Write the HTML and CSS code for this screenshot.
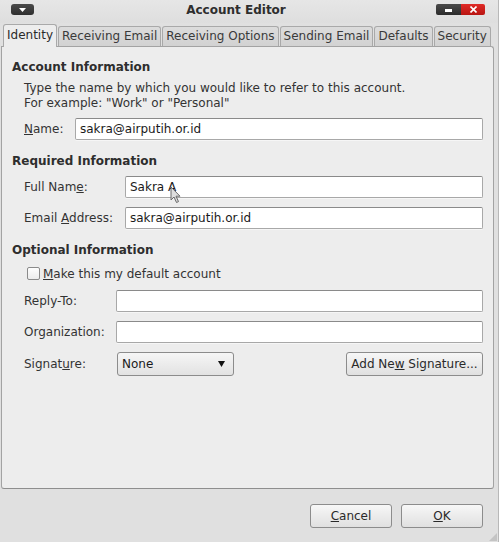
FILE: index.html
```html
<!DOCTYPE html>
<html>
<head>
<meta charset="utf-8">
<link rel="stylesheet" href="styles.css">
</head>
<body>
<div class="window">
  <div class="titlebar">
    <div class="menu-btn"><svg width="7" height="4" viewBox="0 0 7 4"><path d="M0 0H7L3.5 4Z" fill="#fff"/></svg></div>
    <div class="title">Account Editor</div>
    <div class="controls">
      <div class="ctl ctl-min"><span class="min-bar"></span></div>
      <div class="ctl ctl-close"><svg width="7" height="7" viewBox="0 0 7 7"><path d="M0.5 0.5L6.5 6.5M6.5 0.5L0.5 6.5" stroke="#fff" stroke-width="1.6"/></svg></div>
    </div>
  </div>
  <div class="tabs">
    <div class="tab active">Identity</div>
    <div class="tab">Receiving Email</div>
    <div class="tab">Receiving Options</div>
    <div class="tab">Sending Email</div>
    <div class="tab">Defaults</div>
    <div class="tab">Security</div>
  </div>
  <div class="panel">
    <div class="heading">Account Information</div>
    <div class="desc">Type the name by which you would like to refer to this account.<br>For example: "Work" or "Personal"</div>
    <div class="row row-name">
      <label class="lbl lbl-name"><u>N</u>ame:</label>
      <div class="field">sakra@airputih.or.id</div>
    </div>

    <div class="heading heading-gap">Required Information</div>
    <div class="row row-first">
      <label class="lbl lbl-req">Full Nam<u>e</u>:</label>
      <div class="field">Sakra A</div>
    </div>
    <div class="row row-email">
      <label class="lbl lbl-req">Email <u>A</u>ddress:</label>
      <div class="field">sakra@airputih.or.id</div>
    </div>

    <div class="heading heading-gap">Optional Information</div>
    <div class="check-row">
      <span class="checkbox"></span>
      <span class="check-label"><u>M</u>ake this my default account</span>
    </div>
    <div class="row row-reply">
      <label class="lbl lbl-opt">Reply-To:</label>
      <div class="field"></div>
    </div>
    <div class="row row-org">
      <label class="lbl lbl-opt">Organization:</label>
      <div class="field"></div>
    </div>
    <div class="row row-sig">
      <label class="lbl lbl-opt">Signat<u>u</u>re:</label>
      <div class="select"><span>None</span><svg width="7" height="6" viewBox="0 0 7 6"><path d="M0 0H7L3.5 6Z" fill="#111"/></svg></div>
      <div class="spacer"></div>
      <div class="button btn-sig"><span>Add Ne<u>w</u> Signature...</span></div>
    </div>
  </div>
  <div class="footer">
    <div class="button btn-foot"><span><u>C</u>ancel</span></div>
    <div class="button btn-foot"><span><u>O</u>K</span></div>
  </div>
  <svg class="grip" width="8" height="8" viewBox="0 0 8 8"><path d="M8 0V8H0Z" fill="#c4c4c4"/></svg>
  <svg class="cursor" width="12" height="18" viewBox="0 0 12 18"><path d="M1 1V14L4 11L6.5 16.5L8.5 15.6L6 10.2H10Z" fill="#d8d8d8" fill-opacity="0.85" stroke="#6a6a6a" stroke-width="1"/></svg>
</div>
</body>
</html>
```
FILE: styles.css
```css
* { box-sizing: border-box; }
html, body { margin: 0; padding: 0; }
body {
  width: 499px;
  height: 542px;
  overflow: hidden;
  font-family: "DejaVu Sans", sans-serif;
  font-size: 12px;
  color: #333;
  background: #e0e0e0;
}
.window {
  position: relative;
  width: 499px;
  height: 542px;
  display: flex;
  flex-direction: column;
  border-right: 1px solid #b8b8b8;
}
.titlebar {
  height: 23px;
  flex: none;
  display: flex;
  align-items: flex-start;
  background: linear-gradient(#e6e6e6, #dedede);
}
.menu-btn {
  margin: 4px 0 0 11px;
  width: 23px;
  height: 11px;
  border-radius: 3px;
  background: linear-gradient(#4a4a4a, #2e2e2e);
  display: flex;
  align-items: center;
  justify-content: center;
}
.title {
  flex: 1;
  text-align: center;
  font-weight: bold;
  line-height: 15px;
  margin-top: 3px;
  color: #2e2e2e;
  padding-left: 2px;
}
.controls {
  margin: 4px 13px 0 0;
  display: flex;
  height: 11px;
}
.ctl {
  width: 25px;
  height: 11px;
  display: flex;
  align-items: center;
  justify-content: center;
}
.ctl-min {
  background: linear-gradient(#4a4a4a, #2c2c2c);
  border-radius: 2px 0 0 2px;
}
.min-bar {
  width: 7px;
  height: 3px;
  background: #fff;
  margin-top: 1px;
}
.ctl-close {
  width: 24px;
  background: linear-gradient(#e02a26, #b81512);
  border-radius: 0 2px 2px 0;
}
.tabs {
  height: 23px;
  flex: none;
  display: flex;
  align-items: flex-end;
  padding-left: 3px;
  position: relative;
  z-index: 1;
}
.tab {
  height: 20px;
  line-height: 18px;
  padding: 0 3px;
  margin-right: 1px;
  border: 1px solid #a9a9a9;
  border-bottom: none;
  border-radius: 3px 3px 0 0;
  background: linear-gradient(#dcdcdc, #d2d2d2);
  color: #3a3a3a;
  white-space: nowrap;
}
.tab.active {
  height: 23px;
  line-height: 20px;
  margin-bottom: -1px;
  padding: 0 3px;
  background: #ededed;
  color: #2a2a2a;
}
.panel {
  height: 443px;
  flex: none;
  margin: 0 4px 0 1px;
  background: #ededed;
  border: 1px solid #a3a3a3;
  border-bottom-color: #8e8e8e;
  border-radius: 0 3px 3px 3px;
  padding: 13px 10px 0 10px;
  display: flex;
  flex-direction: column;
}
.heading {
  font-weight: bold;
  line-height: 15px;
  color: #2e2e2e;
}
.heading-gap { margin-top: 14px; }
.desc {
  margin: 6px 0 0 12px;
  line-height: 15px;
}
.row {
  display: flex;
  align-items: center;
  margin-left: 12px;
}
.row-name { margin-top: 7px; }
.row-first { margin-top: 7px; }
.row-email { margin-top: 9px; }
.row-reply { margin-top: 9px; }
.row-org { margin-top: 9px; }
.row-sig { margin-top: 9px; }
.lbl { flex: none; }
.lbl-name { width: 51px; }
.lbl-req { width: 101px; }
.lbl-opt { width: 92px; }
.field {
  flex: 1;
  height: 22px;
  background: #fff;
  border: 1px solid #a8a8a8;
  border-top-color: #8a8a8a;
  border-radius: 2px;
  padding-left: 4px;
  line-height: 20px;
  color: #1a1a1a;
  box-shadow: 0 1px 0 #f6f6f6;
}
.check-row {
  display: flex;
  align-items: center;
  margin: 8px 0 0 15px;
  height: 15px;
}
.checkbox {
  width: 13px;
  height: 13px;
  border: 1px solid #8a8a8a;
  border-radius: 2px;
  background: linear-gradient(#fdfdfd, #ececec);
  margin-right: 3px;
}
.select {
  width: 117px;
  height: 24px;
  margin-left: 1px;
  border: 1px solid #8c8c8c;
  border-radius: 3px;
  background: linear-gradient(#f6f6f6, #e2e2e2);
  display: flex;
  align-items: center;
  justify-content: space-between;
  padding: 0 8px 0 4px;
  color: #1a1a1a;
}
.spacer { flex: 1; }
.button {
  height: 24px;
  border: 1px solid #8c8c8c;
  border-radius: 3px;
  background: linear-gradient(#f7f7f7, #e0e0e0);
  display: flex;
  align-items: center;
  justify-content: center;
  color: #2a2a2a;
  white-space: nowrap;
}
.btn-sig { width: 137px; }
.footer {
  display: flex;
  justify-content: flex-end;
  gap: 9px;
  padding: 15px 15px 0 0;
}
.btn-foot { width: 82px; }
.grip {
  position: absolute;
  right: 1px;
  bottom: 1px;
}
.cursor {
  position: absolute;
  left: 170px;
  top: 186px;
}
```
